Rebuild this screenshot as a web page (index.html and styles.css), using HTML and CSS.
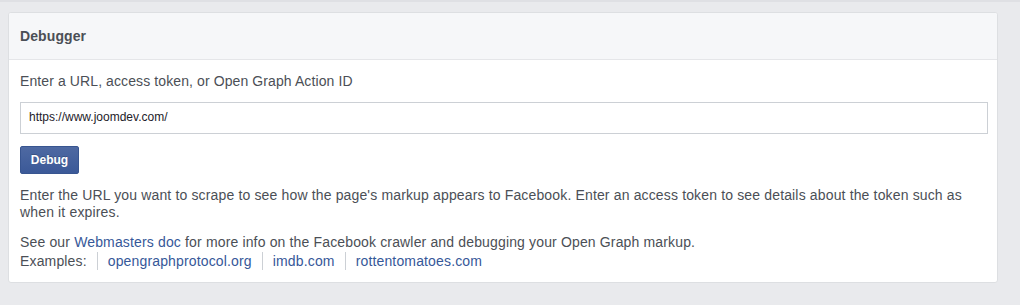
FILE: index.html
```html
<!DOCTYPE html>
<html>
<head>
<meta charset="utf-8">
<link rel="stylesheet" href="styles.css">
</head>
<body>
<div class="topline"></div>
<div class="card">
  <div class="card-header">Debugger</div>
  <div class="card-body">
    <div class="label">Enter a URL, access token, or Open Graph Action ID</div>
    <div class="input">https://www.joomdev.com/</div>
    <button class="btn">Debug</button>
    <p class="desc">Enter the URL you want to scrape to see how the page's markup appears to Facebook. Enter an access token to see details about the token such as when it expires.</p>
    <p class="desc second">See our <a class="link">Webmasters doc</a> for more info on the Facebook crawler and debugging your Open Graph markup.<br>
    Examples:<span class="ex"><a class="link">opengraphprotocol.org</a></span><span class="ex"><a class="link">imdb.com</a></span><span class="ex"><a class="link">rottentomatoes.com</a></span></p>
  </div>
</div>
</body>
</html>
```

FILE: styles.css
```css
html, body {
  margin: 0;
  padding: 0;
  background: #e9eaed;
  font-family: "Liberation Sans", Arial, Helvetica, sans-serif;
  color: #4b4f56;
}
.topline {
  height: 2px;
  background: #dfe0e4;
}
.card {
  margin: 10px 22px 0 8px;
  background: #fff;
  border: 1px solid #dddfe2;
  border-radius: 3px;
  overflow: hidden;
}
.card-header {
  background: #f6f7f9;
  border-bottom: 1px solid #e5e6e9;
  height: 46px;
  line-height: 46px;
  padding: 0 11px;
  font-size: 14px;
  font-weight: bold;
  color: #4b4f56;
  letter-spacing: 0.1px;
}
.card-body {
  padding: 12px 9px 11px 11px;
}
.label {
  font-size: 14px;
  line-height: 18px;
  margin-bottom: 12px;
  letter-spacing: 0.1px;
}
.input {
  height: 30px;
  line-height: 28px;
  border: 1px solid #ccd0d5;
  padding: 0 8px;
  font-size: 12px;
  color: #1d2129;
  margin-bottom: 12px;
}
.btn {
  display: block;
  width: 59px;
  height: 28px;
  padding: 0;
  background: #4267b2;
  background: linear-gradient(#4e69a2, #3b5998);
  border: 1px solid #385590;
  border-radius: 2px;
  color: #fff;
  font-family: "Liberation Sans", Arial, sans-serif;
  font-size: 12px;
  font-weight: bold;
  text-shadow: 0 -1px 0 rgba(0,0,0,0.2);
}
.desc {
  margin: 13px 0 0;
  font-size: 14px;
  line-height: 17px;
  letter-spacing: 0.15px;
}
.desc.second {
  margin-top: 12px;
  line-height: 19px;
}
.link {
  color: #365899;
  text-decoration: none;
}
.ex {
  display: inline-block;
  border-left: 1px solid #ccd0d5;
  margin-left: 10px;
  padding-left: 10px;
  line-height: 18px;
  vertical-align: top;
}
```
